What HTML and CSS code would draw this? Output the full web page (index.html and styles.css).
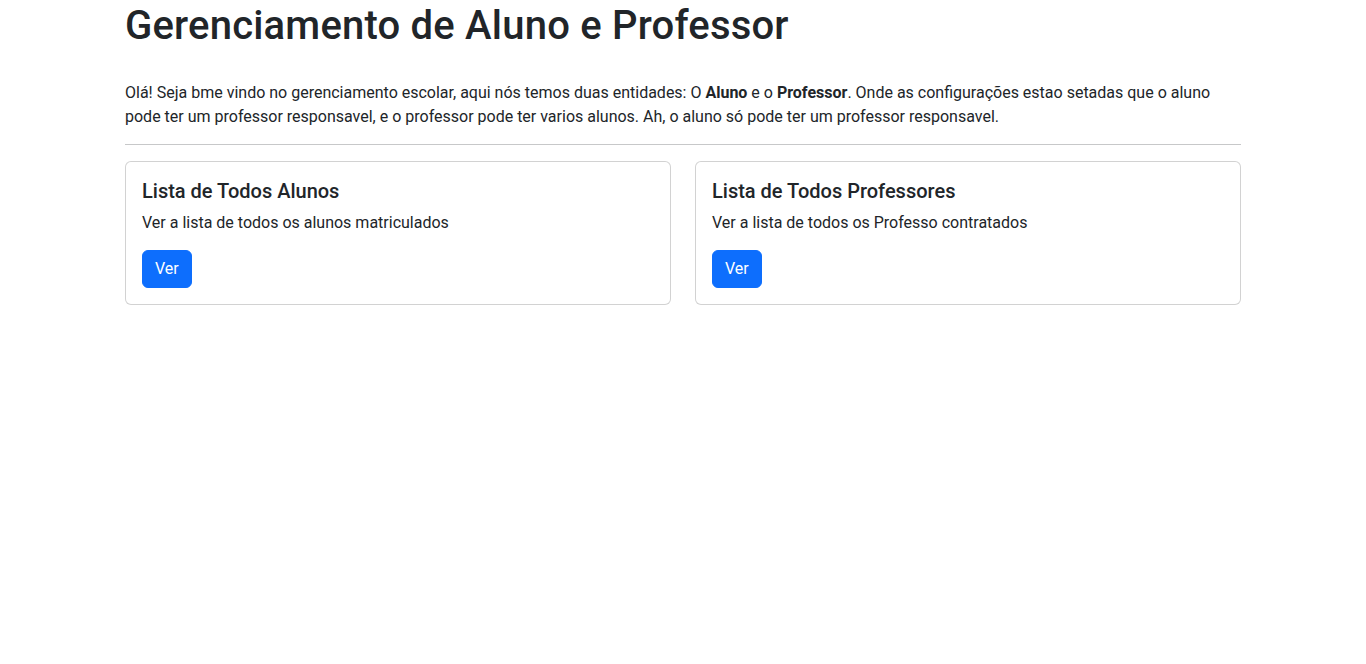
FILE: index.html
```html
<!DOCTYPE html>
<html lang="pt-BR">
<head>
<meta charset="utf-8">
<title>Gerenciamento de Aluno e Professor</title>
<link rel="stylesheet" href="styles.css">
</head>
<body>
<div class="container">
  <h1 class="title">Gerenciamento de Aluno e Professor</h1>
  <p class="lead-text">Olá! Seja bme vindo no gerenciamento escolar, aqui nós temos duas entidades: O <strong>Aluno</strong> e o <strong>Professor</strong>. Onde as configurações estao setadas que o aluno pode ter um professor responsavel, e o professor pode ter varios alunos. Ah, o aluno só pode ter um professor responsavel.</p>
  <hr class="divider">
  <div class="row">
    <div class="col">
      <div class="card">
        <h5 class="card-title">Lista de Todos Alunos</h5>
        <p class="card-text">Ver a lista de todos os alunos matriculados</p>
        <a class="btn" href="#">Ver</a>
      </div>
    </div>
    <div class="col">
      <div class="card">
        <h5 class="card-title">Lista de Todos Professores</h5>
        <p class="card-text">Ver a lista de todos os Professo contratados</p>
        <a class="btn" href="#">Ver</a>
      </div>
    </div>
  </div>
</div>
</body>
</html>
```
FILE: styles.css
```css
*{box-sizing:border-box}
body{
  margin:0;
  font-family:Roboto,"Liberation Sans",sans-serif;
  font-size:16px;
  line-height:24px;
  color:#212529;
  background:#fff;
}
.container{
  max-width:1140px;
  margin:0 auto;
  padding:0 12px;
}
.title{
  margin:0 0 30px;
  padding-top:2px;
  font-size:40px;
  font-weight:500;
  line-height:48px;
  letter-spacing:0.2px;
}
.lead-text{
  margin:0 0 15px;
  padding-top:1px;
  line-height:24px;
}
.lead-text strong{font-weight:700}
.divider{
  margin:15px 0 16px;
  border:0;
  border-top:1px solid #212529;
  opacity:.25;
}
.row{
  display:grid;
  grid-template-columns:1fr 1fr;
  gap:24px;
}
.card{
  border:1px solid rgba(0,0,0,.175);
  border-radius:6px;
  padding:16px;
  background:#fff;
}
.card-title{
  margin:0 0 8px;
  padding-top:1px;
  font-size:20px;
  font-weight:500;
  line-height:24px;
}
.card-text{
  margin:0 0 15px;
}
.btn{
  display:inline-block;
  padding:6px 12px;
  border:1px solid #0d6efd;
  border-radius:6px;
  background:#0d6efd;
  color:#fff;
  text-decoration:none;
  font-size:16px;
  line-height:24px;
}
```
